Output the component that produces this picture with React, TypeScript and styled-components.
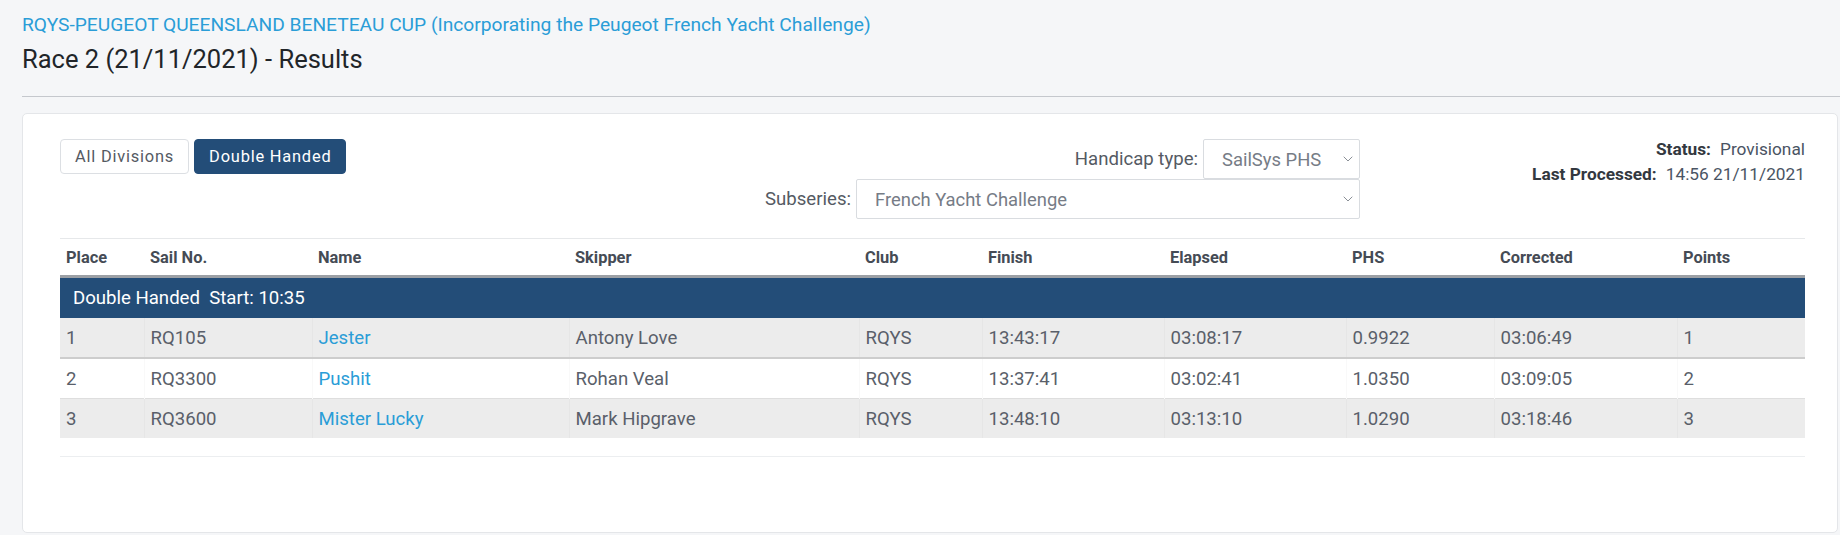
import React from 'react';
import styled, { createGlobalStyle, css } from 'styled-components';
import { ChevronDown } from 'lucide-react';

const colors = {
    page: '#f5f6f8',
    link: '#2a9dd7',
    navy: '#234d78',
    text: '#5a5f6a',
    heading: '#212529',
    headText: '#454b55',
    stripe: '#ececec',
    line: '#e4e6e9',
};

const GlobalStyle = createGlobalStyle`
    body {
        margin: 0;
        background: ${colors.page};
        font-family: Roboto, "Liberation Sans", sans-serif;
        color: ${colors.text};
    }
`;

const Page = styled.div`
    width: 1840px;
    height: 535px;
    overflow: hidden;
`;

const Header = styled.header`
    padding: 14px 0 0 22px;
`;

const EventLink = styled.a`
    display: block;
    color: ${colors.link};
    font-size: 19.2px;
    line-height: 22px;
    text-decoration: none;
`;

const RaceTitle = styled.h1`
    margin: 8px 0 0;
    font-size: 25.5px;
    line-height: 30px;
    font-weight: 400;
    color: ${colors.heading};
`;

const Rule = styled.hr`
    margin: 22px 0 0;
    border: 0;
    border-top: 1px solid #c5c8cd;
`;

const Card = styled.section`
    margin: 16px 2px 0 22px;
    min-height: 420px;
    box-sizing: border-box;
    background: #fff;
    border: 1px solid ${colors.line};
    border-radius: 5px;
    padding: 25px 32px 0 37px;
`;

const Controls = styled.div`
    display: grid;
    grid-template-columns: 1fr auto 445px;
    align-items: start;
`;

const ButtonGroup = styled.div`
    display: flex;
    gap: 5px;
`;

const DivisionButton = styled.button<{ $active?: boolean }>`
    height: 35px;
    padding: 0 14px;
    border-radius: 4px;
    font-family: inherit;
    font-size: 16.4px;
    letter-spacing: 0.8px;
    cursor: pointer;
    ${({ $active }) =>
        $active
            ? css`
                  background: ${colors.navy};
                  border: 1px solid ${colors.navy};
                  color: #fff;
              `
            : css`
                  background: #fff;
                  border: 1px solid #dcdfe3;
                  color: #555a63;
              `}
`;

const Filters = styled.div`
    display: flex;
    flex-direction: column;
    align-items: flex-end;
`;

const FilterRow = styled.label`
    display: flex;
    align-items: center;
    gap: 5px;
    font-size: 18.6px;
    color: #555a63;
`;

const SelectBox = styled.div<{ $width: number }>`
    position: relative;
    width: ${({ $width }) => $width}px;
`;

const Select = styled.select`
    width: 100%;
    height: 40px;
    box-sizing: border-box;
    appearance: none;
    border: 1px solid #d9dce0;
    border-radius: 2px;
    background: #fff;
    padding: 0 30px 0 18px;
    font-family: inherit;
    font-size: 18.4px;
    color: #767c86;
    outline: 0;
`;

const Chevron = styled(ChevronDown)`
    position: absolute;
    right: 4px;
    top: 12px;
    color: #8a8f96;
    pointer-events: none;
`;

const Status = styled.div`
    margin-top: -2px;
    display: flex;
    flex-direction: column;
    align-items: flex-end;
    font-size: 17.3px;
    line-height: 25px;
`;

const StatusLine = styled.div`
    display: flex;
    gap: 9px;
`;

const StatusLabel = styled.span`
    font-weight: 700;
    color: #333840;
`;

const StatusValue = styled.span`
    color: #4a5463;
`;

const TableWrap = styled.div`
    margin-top: 19px;
    padding-bottom: 18px;
    border-bottom: 1px solid #eceef0;
`;

const Table = styled.table`
    width: 100%;
    table-layout: fixed;
    border-collapse: collapse;
    border-top: 1px solid #e6e8ea;
`;

const Col = styled.col<{ $w: number }>`
    width: ${({ $w }) => $w}px;
`;

const HeadCell = styled.th`
    height: 36px;
    padding: 0 6px;
    text-align: left;
    font-size: 16.4px;
    font-weight: 700;
    color: ${colors.headText};
    border-bottom: 3px solid #9ca0a5;
`;

const GroupCell = styled.td`
    height: 40px;
    padding: 0 13px;
    background: ${colors.navy};
    color: #fff;
    font-size: 18.6px;
`;

const Row = styled.tr<{ $striped?: boolean; $strong?: boolean }>`
    background: ${({ $striped }) => ($striped ? colors.stripe : '#fff')};
    border-bottom: ${({ $strong }) => ($strong ? '2px solid #cdcdcd' : '1px solid #dedede')};

    &:last-child {
        border-bottom: 0;
    }
`;

const Cell = styled.td`
    height: 39px;
    padding: 0 6px;
    font-size: 18.6px;
    color: ${colors.text};
    white-space: nowrap;

    & + & {
        border-left: 1px solid rgba(0, 0, 0, 0.025);
    }
`;

const BoatLink = styled.a`
    color: ${colors.link};
    text-decoration: none;
`;

const columns = [
    { label: 'Place', w: 84 },
    { label: 'Sail No.', w: 168 },
    { label: 'Name', w: 257 },
    { label: 'Skipper', w: 290 },
    { label: 'Club', w: 123 },
    { label: 'Finish', w: 182 },
    { label: 'Elapsed', w: 182 },
    { label: 'PHS', w: 148 },
    { label: 'Corrected', w: 183 },
    { label: 'Points', w: 128 },
];

const results = [
    { place: 1, sail: 'RQ105', name: 'Jester', skipper: 'Antony Love', club: 'RQYS', finish: '13:43:17', elapsed: '03:08:17', phs: '0.9922', corrected: '03:06:49', points: 1 },
    { place: 2, sail: 'RQ3300', name: 'Pushit', skipper: 'Rohan Veal', club: 'RQYS', finish: '13:37:41', elapsed: '03:02:41', phs: '1.0350', corrected: '03:09:05', points: 2 },
    { place: 3, sail: 'RQ3600', name: 'Mister Lucky', skipper: 'Mark Hipgrave', club: 'RQYS', finish: '13:48:10', elapsed: '03:13:10', phs: '1.0290', corrected: '03:18:46', points: 3 },
];

const App = () => (
    <Page>
        <GlobalStyle />
        <Header>
            <EventLink href="#">
                RQYS-PEUGEOT QUEENSLAND BENETEAU CUP (Incorporating the Peugeot French Yacht Challenge)
            </EventLink>
            <RaceTitle>Race 2 (21/11/2021) - Results</RaceTitle>
            <Rule />
        </Header>
        <Card>
            <Controls>
                <ButtonGroup>
                    <DivisionButton>All Divisions</DivisionButton>
                    <DivisionButton $active>Double Handed</DivisionButton>
                </ButtonGroup>
                <Filters>
                    <FilterRow>
                        Handicap type:
                        <SelectBox $width={157}>
                            <Select defaultValue="phs">
                                <option value="phs">SailSys PHS</option>
                            </Select>
                            <Chevron size={16} strokeWidth={1.5} />
                        </SelectBox>
                    </FilterRow>
                    <FilterRow>
                        Subseries:
                        <SelectBox $width={504}>
                            <Select defaultValue="fyc">
                                <option value="fyc">French Yacht Challenge</option>
                            </Select>
                            <Chevron size={16} strokeWidth={1.5} />
                        </SelectBox>
                    </FilterRow>
                </Filters>
                <Status>
                    <StatusLine>
                        <StatusLabel>Status:</StatusLabel>
                        <StatusValue>Provisional</StatusValue>
                    </StatusLine>
                    <StatusLine>
                        <StatusLabel>Last Processed:</StatusLabel>
                        <StatusValue>14:56 21/11/2021</StatusValue>
                    </StatusLine>
                </Status>
            </Controls>
            <TableWrap>
                <Table>
                    <colgroup>
                        {columns.map((c) => (
                            <Col key={c.label} $w={c.w} />
                        ))}
                    </colgroup>
                    <thead>
                        <tr>
                            {columns.map((c) => (
                                <HeadCell key={c.label}>{c.label}</HeadCell>
                            ))}
                        </tr>
                    </thead>
                    <tbody>
                        <tr>
                            <GroupCell colSpan={columns.length}>Double Handed&nbsp; Start: 10:35</GroupCell>
                        </tr>
                        {results.map((r, i) => (
                            <Row key={r.sail} $striped={i % 2 === 0} $strong={i === 0}>
                                <Cell>{r.place}</Cell>
                                <Cell>{r.sail}</Cell>
                                <Cell>
                                    <BoatLink href="#">{r.name}</BoatLink>
                                </Cell>
                                <Cell>{r.skipper}</Cell>
                                <Cell>{r.club}</Cell>
                                <Cell>{r.finish}</Cell>
                                <Cell>{r.elapsed}</Cell>
                                <Cell>{r.phs}</Cell>
                                <Cell>{r.corrected}</Cell>
                                <Cell>{r.points}</Cell>
                            </Row>
                        ))}
                    </tbody>
                </Table>
            </TableWrap>
        </Card>
    </Page>
);

export default App;
